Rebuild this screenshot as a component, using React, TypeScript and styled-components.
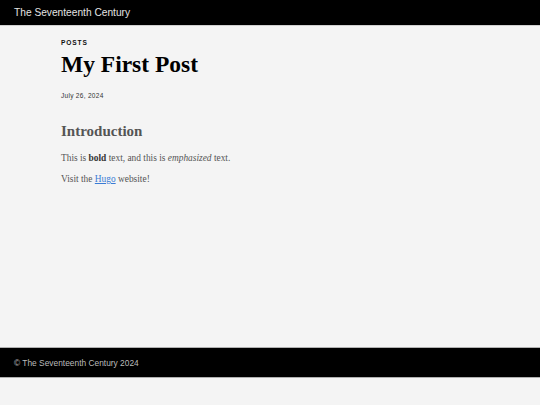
import React from "react";
import styled, { createGlobalStyle } from "styled-components";

const GlobalStyle = createGlobalStyle`
  html, body {
    margin: 0;
    padding: 0;
    background: #f4f4f4;
  }
`;

const Page = styled.div`
  display: flex;
  flex-direction: column;
  background: #f4f4f4;
`;

const Header = styled.header`
  height: 25px;
  background: #000;
  border-bottom: 1px solid #d0d0d0;
  display: flex;
  align-items: center;
  padding-left: 14px;
`;

const SiteTitle = styled.a`
  font-family: "Liberation Sans", Arial, sans-serif;
  font-size: 10.2px;
  color: #e4e4e4;
  text-decoration: none;
`;

const Main = styled.main`
  height: 321px;
  padding: 12px 61px 0;
  box-sizing: border-box;
`;

const Section = styled.div`
  font-family: "Liberation Sans", Arial, sans-serif;
  font-size: 6.6px;
  font-weight: 700;
  letter-spacing: 0.9px;
  color: #111;
  line-height: 10px;
`;

const Title = styled.h1`
  font-family: "Liberation Serif", "Times New Roman", serif;
  font-size: 23.5px;
  font-weight: 700;
  color: #000;
  margin: 3px 0 0;
  line-height: 26px;
`;

const PostDate = styled.div`
  font-family: "Liberation Sans", Arial, sans-serif;
  font-size: 6.5px;
  letter-spacing: 0.3px;
  color: #333;
  margin-top: 15px;
`;

const Heading = styled.h2`
  font-family: "Liberation Serif", "Times New Roman", serif;
  font-size: 15px;
  font-weight: 700;
  color: #555;
  margin: 23px 0 0;
  line-height: 18px;
`;

const Paragraph = styled.p`
  font-family: "Liberation Serif", "Times New Roman", serif;
  font-size: 9.4px;
  color: #555;
  margin: 12px 0 0;
  line-height: 12px;

  & + & {
    margin-top: 9px;
  }
`;

const Strong = styled.strong`
  color: #333;
`;

const Link = styled.a`
  color: #3a7bd5;
  text-decoration: underline;
`;

const Footer = styled.footer`
  height: 29px;
  background: #000;
  border-top: 1px solid #b0b0b0;
  border-bottom: 1px solid #b0b0b0;
  display: flex;
  align-items: center;
  padding-left: 14px;
`;

const FooterText = styled.span`
  font-family: "Liberation Sans", Arial, sans-serif;
  font-size: 8.4px;
  color: #bbb;
`;

const App: React.FC = () => {
  return (
    <>
      <GlobalStyle />
      <Page>
        <Header>
          <SiteTitle href="#">The Seventeenth Century</SiteTitle>
        </Header>
        <Main>
          <Section>POSTS</Section>
          <Title>My First Post</Title>
          <PostDate>July 26, 2024</PostDate>
          <Heading>Introduction</Heading>
          <Paragraph>
            This is <Strong>bold</Strong> text, and this is <em>emphasized</em> text.
          </Paragraph>
          <Paragraph>
            Visit the <Link href="#">Hugo</Link> website!
          </Paragraph>
        </Main>
        <Footer>
          <FooterText>© The Seventeenth Century 2024</FooterText>
        </Footer>
      </Page>
    </>
  );
};

export default App;
